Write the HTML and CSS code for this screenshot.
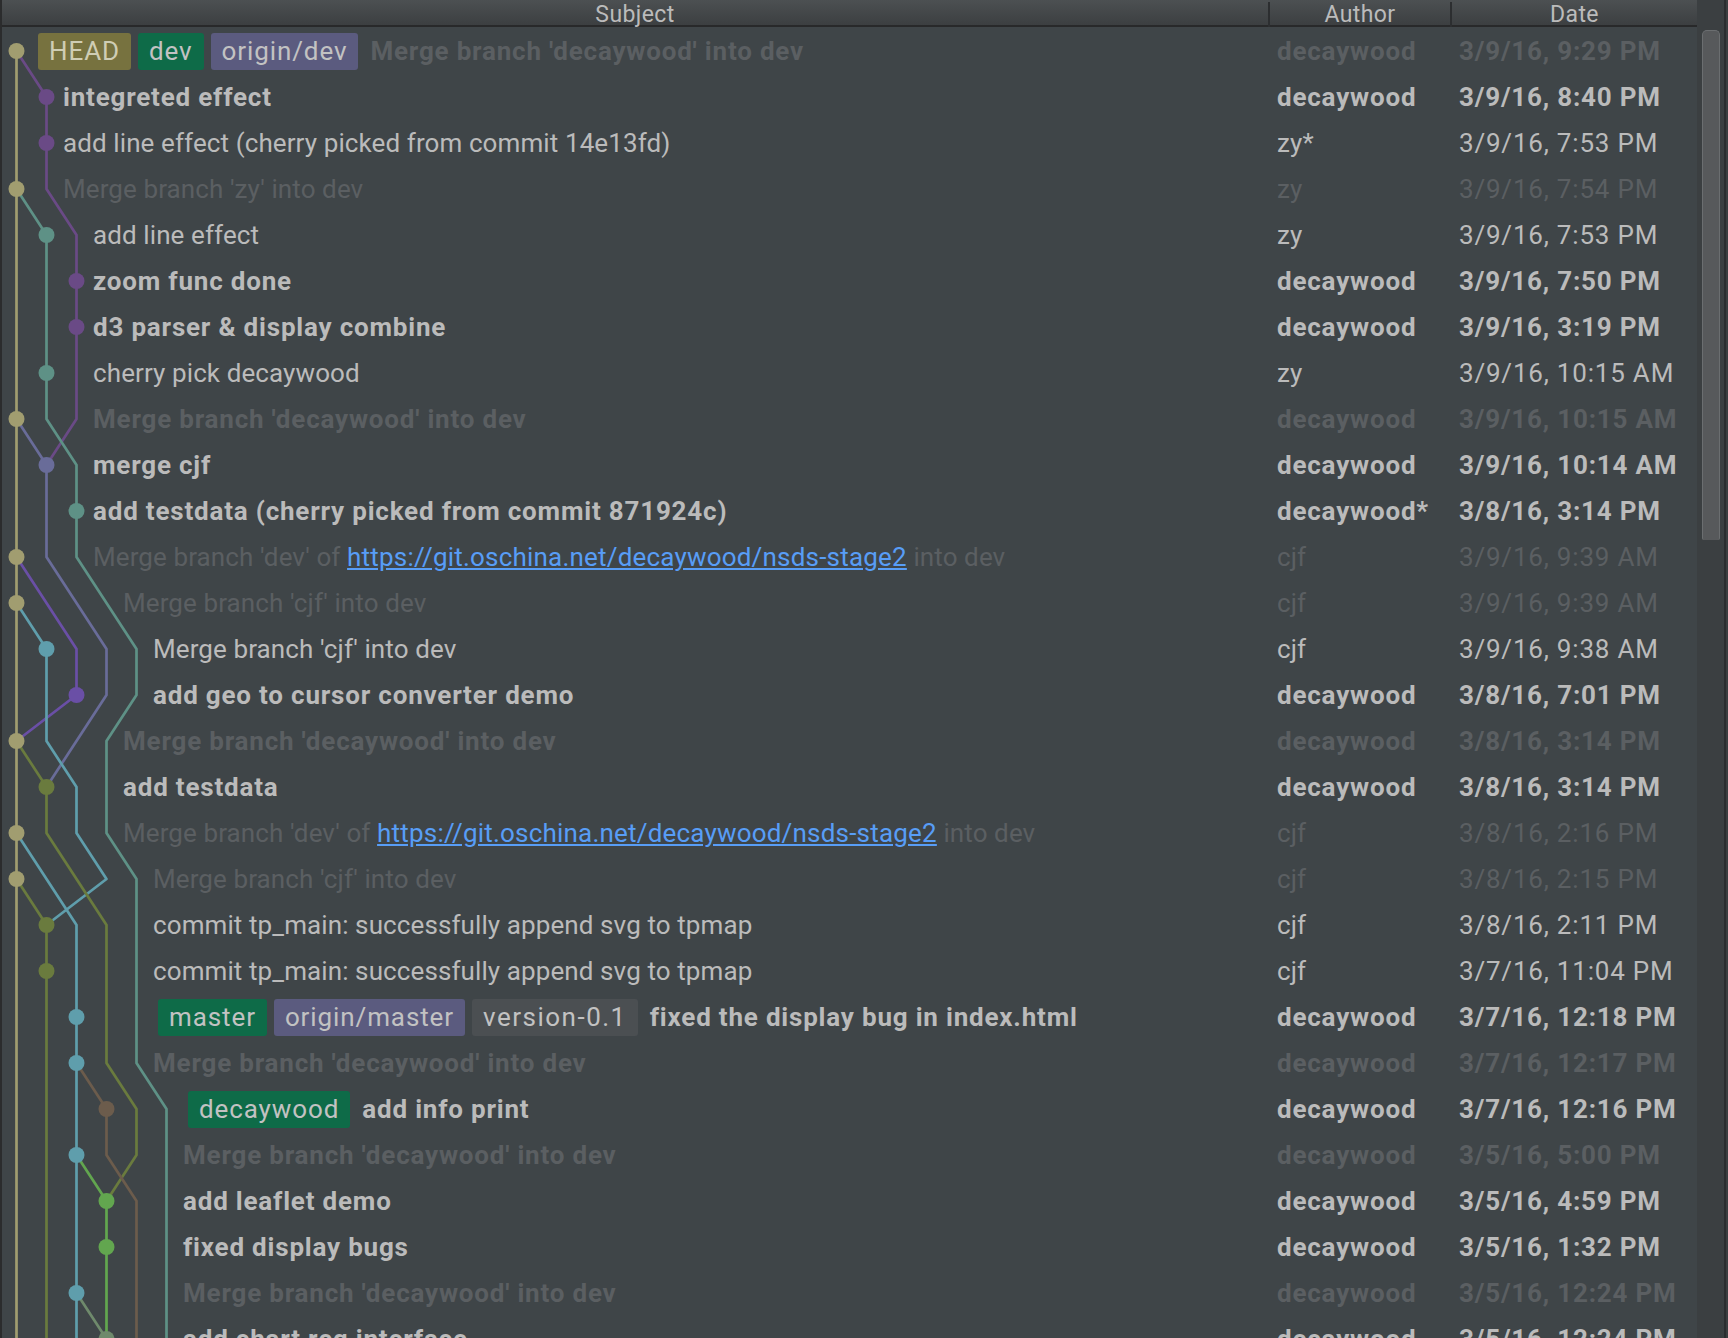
FILE: index.html
```html
<!DOCTYPE html>
<html>
<head>
<meta charset="utf-8">
<title>Git Log</title>
<link rel="stylesheet" href="styles.css">
</head>
<body>
<div class="window">
  <div class="table">
    <div class="header">
      <div class="hcell">Subject</div>
      <div class="hcell sep">Author</div>
      <div class="hcell sep">Date</div>
    </div>
    <div class="body">
      <svg class="graph" width="200" height="1360" viewBox="0 0 200 1360">
        <g class="edges">
          <polyline class="c-olive" points="14.5,23 14.5,1360"/>
          <polyline class="c-purple" points="14.5,23 44.5,69 44.5,161 74.5,207 74.5,391 44.5,437"/>
          <polyline class="c-teal" points="14.5,161 44.5,207 44.5,391 74.5,437 74.5,529 134.5,621 134.5,667 104.5,713 104.5,805 134.5,851 134.5,1035 164.5,1081 164.5,1360"/>
          <polyline class="c-slate" points="14.5,391 44.5,437 44.5,529 104.5,621 104.5,667 44.5,759"/>
          <polyline class="c-violet" points="14.5,529 74.5,621 74.5,667 14.5,713"/>
          <polyline class="c-cyan" points="14.5,575 44.5,621 44.5,713 74.5,759 74.5,805 104.5,851 44.5,897"/>
          <polyline class="c-cyan" points="14.5,805 74.5,897 74.5,1360"/>
          <polyline class="c-moss" points="14.5,713 44.5,759 44.5,805 104.5,897 104.5,1035 134.5,1081 134.5,1127 104.5,1173"/>
          <polyline class="c-moss" points="14.5,851 44.5,897 44.5,1360"/>
          <polyline class="c-brown" points="74.5,1035 104.5,1081 104.5,1127 134.5,1173 134.5,1360"/>
          <polyline class="c-green" points="74.5,1127 104.5,1173 104.5,1360"/>
          <polyline class="c-sage" points="74.5,1265 104.5,1311"/>
        </g>
        <g class="dots">
          <circle class="d-olive" cx="14.5" cy="23" r="8"/>
          <circle class="d-purple" cx="44.5" cy="69" r="8"/>
          <circle class="d-purple" cx="44.5" cy="115" r="8"/>
          <circle class="d-olive" cx="14.5" cy="161" r="8"/>
          <circle class="d-teal" cx="44.5" cy="207" r="8"/>
          <circle class="d-purple" cx="74.5" cy="253" r="8"/>
          <circle class="d-purple" cx="74.5" cy="299" r="8"/>
          <circle class="d-teal" cx="44.5" cy="345" r="8"/>
          <circle class="d-olive" cx="14.5" cy="391" r="8"/>
          <circle class="d-slate" cx="44.5" cy="437" r="8"/>
          <circle class="d-teal" cx="74.5" cy="483" r="8"/>
          <circle class="d-olive" cx="14.5" cy="529" r="8"/>
          <circle class="d-olive" cx="14.5" cy="575" r="8"/>
          <circle class="d-cyan" cx="44.5" cy="621" r="8"/>
          <circle class="d-violet" cx="74.5" cy="667" r="8"/>
          <circle class="d-olive" cx="14.5" cy="713" r="8"/>
          <circle class="d-moss" cx="44.5" cy="759" r="8"/>
          <circle class="d-olive" cx="14.5" cy="805" r="8"/>
          <circle class="d-olive" cx="14.5" cy="851" r="8"/>
          <circle class="d-moss" cx="44.5" cy="897" r="8"/>
          <circle class="d-moss" cx="44.5" cy="943" r="8"/>
          <circle class="d-cyan" cx="74.5" cy="989" r="8"/>
          <circle class="d-cyan" cx="74.5" cy="1035" r="8"/>
          <circle class="d-brown" cx="104.5" cy="1081" r="8"/>
          <circle class="d-cyan" cx="74.5" cy="1127" r="8"/>
          <circle class="d-green" cx="104.5" cy="1173" r="8"/>
          <circle class="d-green" cx="104.5" cy="1219" r="8"/>
          <circle class="d-cyan" cx="74.5" cy="1265" r="8"/>
          <circle class="d-sage" cx="104.5" cy="1311" r="8"/>
        </g>
      </svg>

      <div class="row dim bold">
        <div class="subject i0"><span class="tag t-head">HEAD</span><span class="tag t-local">dev</span><span class="tag t-remote">origin/dev</span><span class="msg">Merge branch 'decaywood' into dev</span></div>
        <div class="author">decaywood</div><div class="date">3/9/16, 9:29 PM</div>
      </div>
      <div class="row bold">
        <div class="subject i1"><span class="msg">integreted effect</span></div>
        <div class="author">decaywood</div><div class="date">3/9/16, 8:40 PM</div>
      </div>
      <div class="row">
        <div class="subject i1"><span class="msg">add line effect (cherry picked from commit 14e13fd)</span></div>
        <div class="author">zy*</div><div class="date">3/9/16, 7:53 PM</div>
      </div>
      <div class="row dim">
        <div class="subject i1"><span class="msg">Merge branch 'zy' into dev</span></div>
        <div class="author">zy</div><div class="date">3/9/16, 7:54 PM</div>
      </div>
      <div class="row">
        <div class="subject i2"><span class="msg">add line effect</span></div>
        <div class="author">zy</div><div class="date">3/9/16, 7:53 PM</div>
      </div>
      <div class="row bold">
        <div class="subject i2"><span class="msg">zoom func done</span></div>
        <div class="author">decaywood</div><div class="date">3/9/16, 7:50 PM</div>
      </div>
      <div class="row bold">
        <div class="subject i2"><span class="msg">d3 parser &amp; display combine</span></div>
        <div class="author">decaywood</div><div class="date">3/9/16, 3:19 PM</div>
      </div>
      <div class="row">
        <div class="subject i2"><span class="msg">cherry pick decaywood</span></div>
        <div class="author">zy</div><div class="date">3/9/16, 10:15 AM</div>
      </div>
      <div class="row dim bold">
        <div class="subject i2"><span class="msg">Merge branch 'decaywood' into dev</span></div>
        <div class="author">decaywood</div><div class="date">3/9/16, 10:15 AM</div>
      </div>
      <div class="row bold">
        <div class="subject i2"><span class="msg">merge cjf</span></div>
        <div class="author">decaywood</div><div class="date">3/9/16, 10:14 AM</div>
      </div>
      <div class="row bold">
        <div class="subject i2"><span class="msg">add testdata (cherry picked from commit 871924c)</span></div>
        <div class="author">decaywood*</div><div class="date">3/8/16, 3:14 PM</div>
      </div>
      <div class="row dim">
        <div class="subject i2"><span class="msg">Merge branch 'dev' of&nbsp;<a class="link" href="#">https://git.oschina.net/decaywood/nsds-stage2</a>&nbsp;into dev</span></div>
        <div class="author">cjf</div><div class="date">3/9/16, 9:39 AM</div>
      </div>
      <div class="row dim">
        <div class="subject i3"><span class="msg">Merge branch 'cjf' into dev</span></div>
        <div class="author">cjf</div><div class="date">3/9/16, 9:39 AM</div>
      </div>
      <div class="row">
        <div class="subject i4"><span class="msg">Merge branch 'cjf' into dev</span></div>
        <div class="author">cjf</div><div class="date">3/9/16, 9:38 AM</div>
      </div>
      <div class="row bold">
        <div class="subject i4"><span class="msg">add geo to cursor converter demo</span></div>
        <div class="author">decaywood</div><div class="date">3/8/16, 7:01 PM</div>
      </div>
      <div class="row dim bold">
        <div class="subject i3"><span class="msg">Merge branch 'decaywood' into dev</span></div>
        <div class="author">decaywood</div><div class="date">3/8/16, 3:14 PM</div>
      </div>
      <div class="row bold">
        <div class="subject i3"><span class="msg">add testdata</span></div>
        <div class="author">decaywood</div><div class="date">3/8/16, 3:14 PM</div>
      </div>
      <div class="row dim">
        <div class="subject i3"><span class="msg">Merge branch 'dev' of&nbsp;<a class="link" href="#">https://git.oschina.net/decaywood/nsds-stage2</a>&nbsp;into dev</span></div>
        <div class="author">cjf</div><div class="date">3/8/16, 2:16 PM</div>
      </div>
      <div class="row dim">
        <div class="subject i4"><span class="msg">Merge branch 'cjf' into dev</span></div>
        <div class="author">cjf</div><div class="date">3/8/16, 2:15 PM</div>
      </div>
      <div class="row">
        <div class="subject i4"><span class="msg">commit tp_main: successfully append svg to tpmap</span></div>
        <div class="author">cjf</div><div class="date">3/8/16, 2:11 PM</div>
      </div>
      <div class="row">
        <div class="subject i4"><span class="msg">commit tp_main: successfully append svg to tpmap</span></div>
        <div class="author">cjf</div><div class="date">3/7/16, 11:04 PM</div>
      </div>
      <div class="row bold">
        <div class="subject i4"><span class="tag t-local">master</span><span class="tag t-remote">origin/master</span><span class="tag t-version">version-0.1</span><span class="msg">fixed the display bug in index.html</span></div>
        <div class="author">decaywood</div><div class="date">3/7/16, 12:18 PM</div>
      </div>
      <div class="row dim bold">
        <div class="subject i4"><span class="msg">Merge branch 'decaywood' into dev</span></div>
        <div class="author">decaywood</div><div class="date">3/7/16, 12:17 PM</div>
      </div>
      <div class="row bold">
        <div class="subject i5"><span class="tag t-local">decaywood</span><span class="msg">add info print</span></div>
        <div class="author">decaywood</div><div class="date">3/7/16, 12:16 PM</div>
      </div>
      <div class="row dim bold">
        <div class="subject i5"><span class="msg">Merge branch 'decaywood' into dev</span></div>
        <div class="author">decaywood</div><div class="date">3/5/16, 5:00 PM</div>
      </div>
      <div class="row bold">
        <div class="subject i5"><span class="msg">add leaflet demo</span></div>
        <div class="author">decaywood</div><div class="date">3/5/16, 4:59 PM</div>
      </div>
      <div class="row bold">
        <div class="subject i5"><span class="msg">fixed display bugs</span></div>
        <div class="author">decaywood</div><div class="date">3/5/16, 1:32 PM</div>
      </div>
      <div class="row dim bold">
        <div class="subject i5"><span class="msg">Merge branch 'decaywood' into dev</span></div>
        <div class="author">decaywood</div><div class="date">3/5/16, 12:24 PM</div>
      </div>
      <div class="row bold">
        <div class="subject i5"><span class="msg">add chart req interface</span></div>
        <div class="author">decaywood</div><div class="date">3/5/16, 12:24 PM</div>
      </div>
    </div>
  </div>
  <div class="scrollbar"><div class="thumb"></div></div>
  <div class="edge"></div>
  <div class="edge2"></div>
</div>
</body>
</html>
```

FILE: styles.css
```css
html, body {
  margin: 0;
  padding: 0;
  background: #3f4548;
}
body {
  font-family: Roboto, "Liberation Sans", sans-serif;
}
.window {
  display: flex;
  width: 1728px;
  height: 1338px;
  overflow: hidden;
  border-left: 2px solid #2b2c2d;
  box-sizing: border-box;
}
.table {
  width: 1695px;
  flex: none;
  display: flex;
  flex-direction: column;
}
.header {
  display: grid;
  grid-template-columns: 1266px 182px 247px;
  height: 25px;
  background: linear-gradient(#4c5052, #3c3f41);
  border-bottom: 2px solid #28292a;
}
.hcell {
  text-align: center;
  color: #bbbbbb;
  font-size: 23px;
  letter-spacing: 0.4px;
  line-height: 29px;
  overflow: visible;
}
.hcell.sep {
  border-left: 2px solid #2c2e30;
  margin: 2px 0;
  line-height: 25px;
}
.body {
  position: relative;
  padding-top: 1px;
  flex: 1;
}
.graph {
  position: absolute;
  left: 0;
  top: 1px;
}
.edges polyline {
  fill: none;
  stroke-width: 2.7;
  stroke-linejoin: round;
  stroke-linecap: round;
}
.c-olive { stroke: #a19d70; }
.c-purple { stroke: #6a4a86; }
.c-teal { stroke: #5e9186; }
.c-slate { stroke: #696c99; }
.c-violet { stroke: #6a4fa6; }
.c-cyan { stroke: #5f9eac; }
.c-moss { stroke: #6a7b3e; }
.c-brown { stroke: #6c5c4c; }
.c-green { stroke: #62a64f; }
.c-sage { stroke: #6f8a6c; }
.d-olive { fill: #a19d70; }
.d-purple { fill: #6a4a86; }
.d-teal { fill: #5e9186; }
.d-slate { fill: #696c99; }
.d-violet { fill: #6a4fa6; }
.d-cyan { fill: #5f9eac; }
.d-moss { fill: #6a7b3e; }
.d-brown { fill: #6c5c4c; }
.d-green { fill: #62a64f; }
.d-sage { fill: #6f8a6c; }

.row {
  position: relative;
  display: grid;
  grid-template-columns: 1266px 182px 247px;
  height: 46px;
  line-height: 46px;
  font-size: 26px;
  color: #bbbbbb;
  white-space: nowrap;
  letter-spacing: 0.1px;
}
.row.bold {
  font-weight: 700;
  letter-spacing: 0.8px;
}
.row.dim { color: #5b5f62; }
.subject {
  display: flex;
  align-items: center;
  overflow: hidden;
}
.i0 { padding-left: 31px; }
.i1 { padding-left: 61px; }
.i2 { padding-left: 91px; }
.i3 { padding-left: 121px; }
.i4 { padding-left: 151px; }
.i5 { padding-left: 181px; }
.author { padding-left: 9px; }
.date {
  padding-left: 9px;
  letter-spacing: 0.8px;
}
.tag {
  height: 37px;
  line-height: 37px;
  padding: 0 11px;
  border-radius: 3px;
  margin-right: 7px;
  color: #c2c2c2;
  font-weight: 400;
  letter-spacing: 0.9px;
}
.tag:first-child { margin-left: 5px; }
.tag + .msg { margin-left: 5px; }
.t-head { background: #77723f; color: #cfcdb4; }
.t-local { background: #0e6b48; }
.t-remote { background: #5b5b7f; }
.t-version { background: #4b4f52; letter-spacing: 1.5px; }
.link {
  color: #589df6;
  text-decoration: underline;
  font-weight: 400;
  letter-spacing: 0.2px;
}
.scrollbar {
  width: 27px;
  flex: none;
  background: #3b3f41;
  padding-top: 30px;
  box-sizing: border-box;
}
.thumb {
  margin-left: 5px;
  width: 18px;
  height: 510px;
  background: #57595b;
  border: 1px solid #6b6e70;
  border-bottom: none;
  border-radius: 5px 5px 2px 2px;
  box-sizing: border-box;
}
.edge {
  width: 2px;
  flex: none;
  background: #2b2d2f;
}
.edge2 {
  width: 2px;
  flex: none;
  background: #3b3e40;
}
```
